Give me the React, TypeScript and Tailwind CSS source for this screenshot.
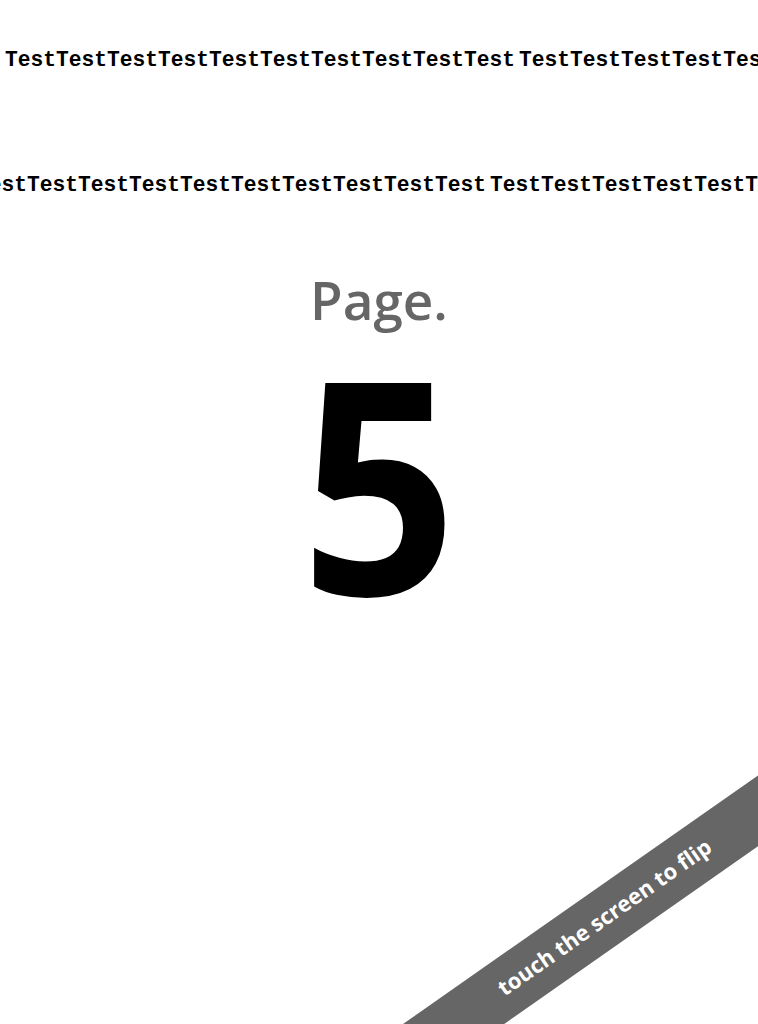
import React from 'react'

const WORD = 'TestTestTestTestTestTestTestTestTestTest'

function TickerRow({ offset }: { offset: string }) {
  return (
    <div className="h-[26px] overflow-hidden whitespace-nowrap">
      <div className={`flex gap-[4px] ${offset}`}>
        <span>{WORD}</span>
        <span>{WORD}</span>
      </div>
    </div>
  )
}

export default function App() {
  return (
    <div className="relative w-[758px] h-[1024px] overflow-hidden bg-white">
      {/* Ticker lines */}
      <div
        className="pt-[47px] text-[21.25px] leading-[26px] font-bold text-black"
        style={{ fontFamily: '"Courier New", Courier, "Nimbus Mono PS", FreeMono, "Liberation Mono", monospace' }}
      >
        <TickerRow offset="ml-[5px]" />
        <div className="h-[99px]" />
        <TickerRow offset="-ml-[24px]" />
      </div>

      {/* Title */}
      <div
        className="flex flex-col items-center mt-[66px]"
        style={{ fontFamily: '"Open Sans", sans-serif' }}
      >
        <div className="text-[53px] leading-[72px] font-semibold text-[#666666]">Page.</div>
        <div className="text-[297px] leading-[300px] font-bold text-black -mt-[6px] scale-x-[0.92]">5</div>
      </div>

      {/* Flip ribbon */}
      <div
        className="absolute left-[255px] top-[889px] w-[700px] h-[58px] bg-[#666666] -rotate-[35deg] flex items-center justify-center"
        style={{ fontFamily: '"Open Sans", sans-serif' }}
      >
        <span className="text-white text-[22px] leading-[30px] font-bold -mt-[4px]">touch the screen to flip</span>
      </div>
    </div>
  )
}
